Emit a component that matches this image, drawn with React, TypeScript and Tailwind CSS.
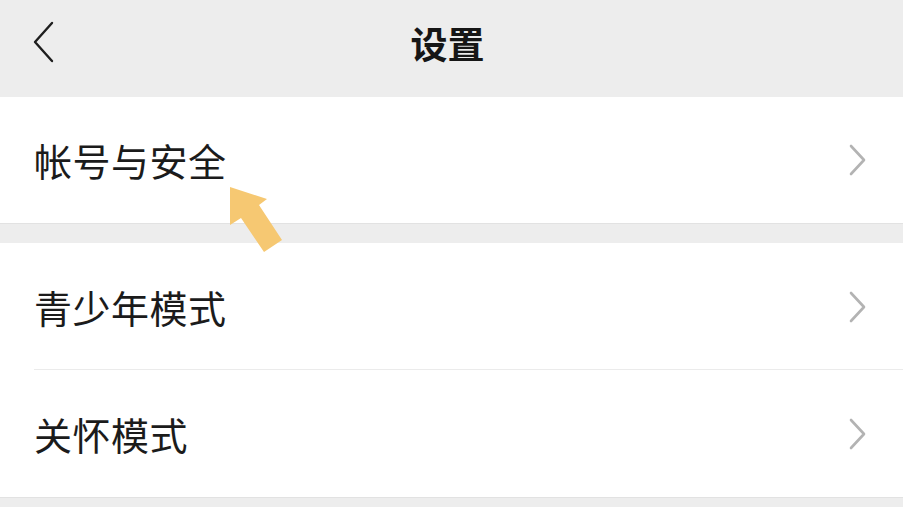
const font = { fontFamily: '"Noto Sans CJK SC", "Noto Sans", sans-serif' };

const Chevron = () => (
  <svg width="20" height="32" viewBox="0 0 20 32" fill="none" className="shrink-0">
    <path d="M4 2 L17 16 L4 30" stroke="#b3b3b3" strokeWidth="2.6" strokeLinecap="round" strokeLinejoin="round" />
  </svg>
);

const Row = ({ label, divider, first }: { label: string; divider?: boolean; first?: boolean }) => (
  <div className={`relative flex items-center justify-between pl-[34px] pr-[36px] ${first ? "h-[126px]" : "h-[127px]"}`}>
    <span className="text-[38px] text-[#1b1b1b] leading-none tracking-[0.5px]">{label}</span>
    <Chevron />
    {divider && <div className="absolute bottom-0 left-[34px] right-0 h-px bg-[#ebebeb]" />}
  </div>
);

export default function App() {
  return (
    <div className="relative w-[903px] h-[507px] bg-[#ededed] overflow-hidden" style={font}>
      <div className="h-[97px] flex items-center relative">
        <svg width="26" height="42" viewBox="0 0 26 42" fill="none" className="absolute left-[30px] top-[21px]">
          <path d="M22 2 L5 21 L22 40" stroke="#1e1e1e" strokeWidth="2.4" strokeLinecap="round" strokeLinejoin="round" />
        </svg>
        <h1 className="flex-1 text-center text-[37px] font-bold text-[#161616] leading-none -mt-[10px] pr-[8px]">设置</h1>
      </div>

      <div className="bg-white border-b border-[#e2e2e2]">
        <Row label="帐号与安全" first />
      </div>

      <div className="h-[19px]" />

      <div className="bg-white border-b border-[#e2e2e2]">
        <Row label="青少年模式" divider />
        <Row label="关怀模式" />
      </div>

      <svg className="absolute left-0 top-0 pointer-events-none" width="903" height="507">
        <polygon points="230,187 267,199 259,205 282,240 264,252 241,218 230,225" fill="#f6c872" />
      </svg>
    </div>
  );
}
